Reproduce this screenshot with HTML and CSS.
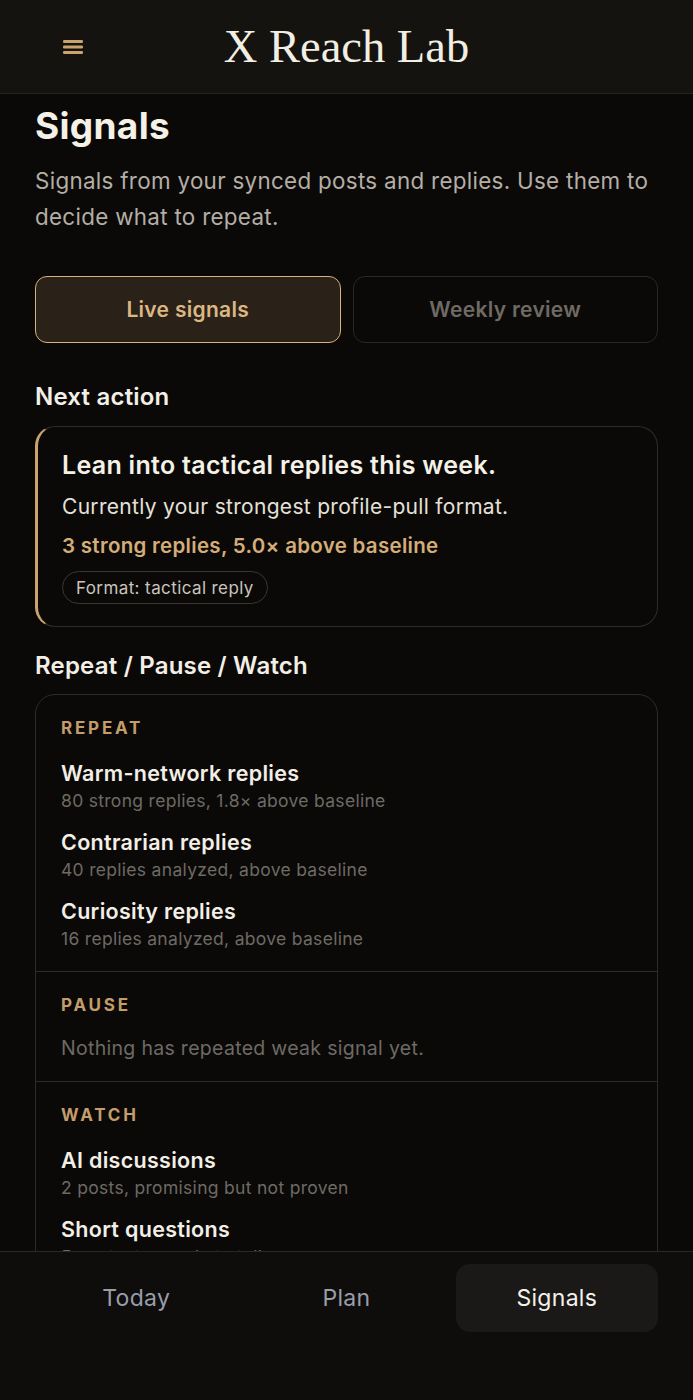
FILE: index.html
```html
<!DOCTYPE html>
<html>
  <head>
    <title>Signals - X Reach Lab</title>
    <meta name="viewport" content="width=device-width, initial-scale=1.0" />
    <link rel="stylesheet" href="styles.css">
  </head>
  <body>
    <header class="topbar">
      <button class="menu" aria-label="Menu">
        <svg width="20" height="14" viewBox="0 0 20 14">
          <rect x="0" y="0" width="20" height="3" rx="1.2" fill="#c9a46e" />
          <rect x="0" y="5.5" width="20" height="3" rx="1.2" fill="#c9a46e" />
          <rect x="0" y="11" width="20" height="3" rx="1.2" fill="#c9a46e" />
        </svg>
      </button>
      <div class="brand">X Reach Lab</div>
      <div></div>
    </header>

    <main class="page">
      <h1>Signals</h1>
      <p class="lead">Signals from your synced posts and replies. Use them to decide what to repeat.</p>

      <div class="tabs">
        <button class="tab active">Live signals</button>
        <button class="tab">Weekly review</button>
      </div>

      <h2>Next action</h2>
      <section class="action">
        <div class="action-title">Lean into tactical replies this week.</div>
        <div class="action-sub">Currently your strongest profile-pull format.</div>
        <div class="action-stat">3 strong replies, 5.0× above baseline</div>
        <span class="pill">Format: tactical reply</span>
      </section>

      <h2 class="after-card">Repeat / Pause / Watch</h2>
      <section class="rpw">
        <div class="group">
          <div class="label">Repeat</div>
          <div class="items">
            <div class="item">
              <div class="item-title">Warm-network replies</div>
              <div class="item-sub">80 strong replies, 1.8× above baseline</div>
            </div>
            <div class="item">
              <div class="item-title">Contrarian replies</div>
              <div class="item-sub">40 replies analyzed, above baseline</div>
            </div>
            <div class="item">
              <div class="item-title">Curiosity replies</div>
              <div class="item-sub">16 replies analyzed, above baseline</div>
            </div>
          </div>
        </div>
        <div class="group">
          <div class="label">Pause</div>
          <div class="empty">Nothing has repeated weak signal yet.</div>
        </div>
        <div class="group">
          <div class="label">Watch</div>
          <div class="items">
            <div class="item">
              <div class="item-title">AI discussions</div>
              <div class="item-sub">2 posts, promising but not proven</div>
            </div>
            <div class="item">
              <div class="item-title">Short questions</div>
              <div class="item-sub">5 posts, too early to tell</div>
            </div>
          </div>
        </div>
      </section>
    </main>

    <nav class="bottom">
      <a href="#">Today</a>
      <a href="#">Plan</a>
      <a href="#" class="current">Signals</a>
    </nav>
  </body>
</html>
```

FILE: styles.css
```css
:root {
  color-scheme: dark;
}
body {
  margin: 0;
  font-family: Inter, "Noto Sans", sans-serif;
  background-color: #0a0908;
  color: #f3efe6;
}
button {
  font-family: inherit;
}

.topbar {
  position: sticky;
  top: 0;
  z-index: 2;
  height: 93px;
  display: grid;
  grid-template-columns: 1fr auto 1fr;
  align-items: center;
  background-color: #14130f;
  border-bottom: 1px solid #262420;
}
.menu {
  justify-self: start;
  margin-left: 61px;
  padding: 2px;
  background: none;
  border: none;
  display: flex;
}
.brand {
  font-family: "Liberation Serif", "Times New Roman", serif;
  font-size: 46.5px;
  color: #f2eee3;
  line-height: 1;
  padding-top: 2px;
}

.page {
  padding: 0 35px 200px 35px;
}
h1 {
  margin: 10px 0 0 0;
  font-size: 37px;
  line-height: 43px;
  font-weight: 700;
  letter-spacing: 0.3px;
  color: #f5f1e7;
}
.lead {
  margin: 16px 0 0 0;
  font-size: 22.4px;
  line-height: 36px;
  letter-spacing: 0.3px;
  color: #b4aea5;
}

.tabs {
  margin-top: 41px;
  display: grid;
  grid-template-columns: 1fr 1fr;
  gap: 12px;
}
.tab {
  height: 67px;
  border-radius: 12px;
  border: 1.5px solid #2a2825;
  background: #0a0908;
  color: #6f6a63;
  font-size: 21px;
  letter-spacing: 0.3px;
  font-weight: 600;
}
.tab.active {
  background: #2a2219;
  border-color: #d6b27e;
  color: #dcb783;
}

h2 {
  margin: 39px 0 15px 0;
  font-size: 24px;
  line-height: 29px;
  font-weight: 600;
  letter-spacing: 0.2px;
  color: #f3efe6;
}
h2.after-card {
  margin-top: 24px;
  margin-bottom: 14px;
}

.action {
  border: 1px solid #2e2c29;
  border-left: 3px solid #c9a46e;
  border-radius: 20px;
  padding: 23px 24px 22px 24px;
  display: flex;
  flex-direction: column;
  align-items: flex-start;
}
.action-title {
  font-size: 25px;
  line-height: 30px;
  font-weight: 600;
  letter-spacing: 0.3px;
  color: #f5f1e7;
}
.action-sub {
  margin-top: 13px;
  font-size: 21px;
  line-height: 28px;
  letter-spacing: 0.3px;
  color: #e6e1d8;
}
.action-stat {
  margin-top: 12px;
  font-size: 20.5px;
  line-height: 26px;
  font-weight: 600;
  letter-spacing: 0.3px;
  color: #d5ad78;
}
.pill {
  margin-top: 12px;
  height: 33px;
  box-sizing: border-box;
  padding: 0 13px;
  display: inline-flex;
  align-items: center;
  border: 1px solid #3a3733;
  border-radius: 999px;
  font-size: 17px;
  letter-spacing: 0.4px;
  color: #cbc5bb;
}

.rpw {
  border: 1px solid #2e2c29;
  border-radius: 20px;
}
.group {
  padding: 22px 25px 20px 25px;
}
.group + .group {
  border-top: 1.5px solid #2e2c29;
}
.label {
  font-size: 17px;
  line-height: 22px;
  font-weight: 700;
  letter-spacing: 2.8px;
  text-transform: uppercase;
  color: #c39d6a;
}
.items {
  margin-top: 20px;
  display: flex;
  flex-direction: column;
  gap: 15px;
}
.item-title {
  font-size: 21.5px;
  line-height: 28px;
  font-weight: 600;
  letter-spacing: 0.3px;
  color: #f3efe6;
}
.item-sub {
  margin-top: 2px;
  font-size: 17.5px;
  line-height: 24px;
  letter-spacing: 0.3px;
  color: #6e6a64;
}
.empty {
  margin-top: 19px;
  font-size: 19.5px;
  line-height: 26px;
  letter-spacing: 0.3px;
  color: #6e6a64;
}

.bottom {
  position: fixed;
  left: 0;
  right: 0;
  bottom: 0;
  height: 149px;
  box-sizing: border-box;
  padding: 12px 35px 0 35px;
  display: grid;
  grid-template-columns: 1fr 1fr 1fr;
  gap: 8px;
  align-items: start;
  background-color: #0e0d0c;
  border-top: 1.5px solid #2a2825;
}
.bottom a {
  height: 68px;
  border-radius: 14px;
  display: flex;
  align-items: center;
  justify-content: center;
  text-decoration: none;
  font-size: 23px;
  letter-spacing: 0.3px;
  color: #9a9daa;
}
.bottom a.current {
  background-color: #1a1918;
  color: #f5f2ea;
}
```
